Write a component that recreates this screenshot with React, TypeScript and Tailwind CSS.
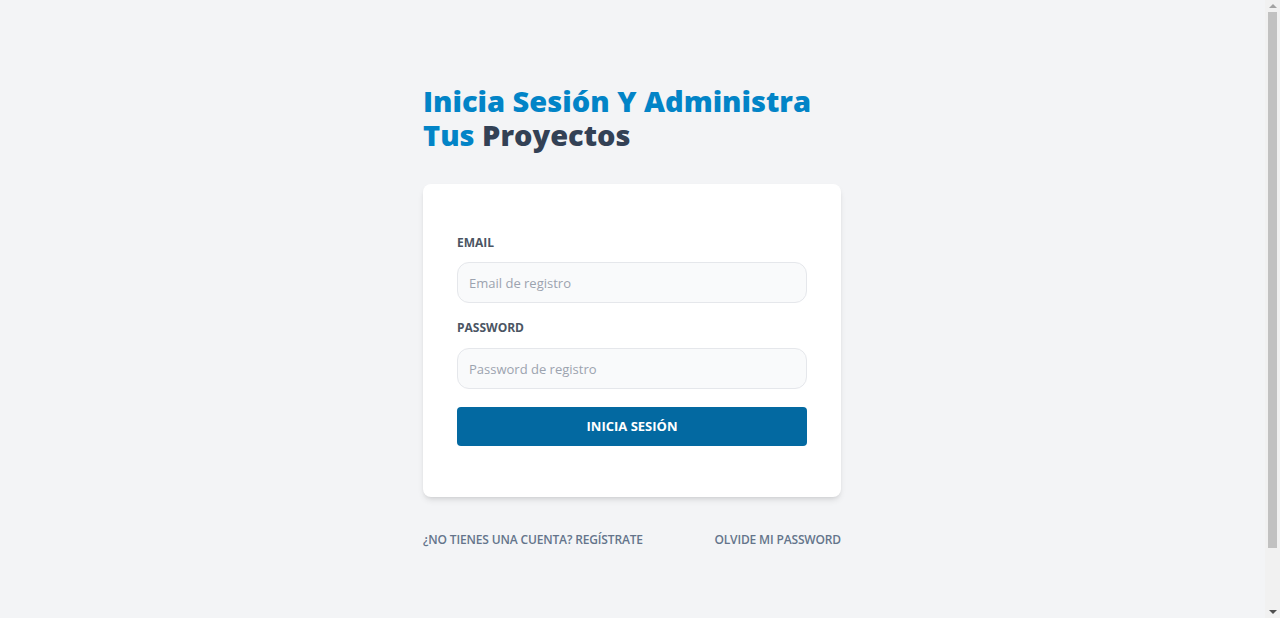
function Scrollbar() {
  return (
    <aside className="flex w-[15px] flex-col items-center bg-[#f1f1f1]">
      <div className="flex h-[12px] w-full items-center justify-center">
        <div className="h-0 w-0 border-x-[4px] border-b-[4px] border-x-transparent border-b-[#a3a3a3]" />
      </div>
      <div className="h-[536px] w-[9px] bg-[#c1c1c1]" />
      <div className="flex-1" />
      <div className="flex h-[12px] w-full items-center justify-center">
        <div className="h-0 w-0 border-x-[4px] border-t-[4px] border-x-transparent border-t-[#505050]" />
      </div>
    </aside>
  );
}

export default function App() {
  return (
    <div className="flex h-screen bg-[#f3f4f6]" style={{ fontFamily: '"Open Sans", sans-serif' }}>
      <div className="flex-1 pt-[84px] pr-px">
        <main className="mx-auto w-[418px]">
          <h1 className="text-[29px] font-extrabold leading-[34px] text-[#0284c7]">
            Inicia Sesión Y Administra Tus <span className="text-[#334155]">Proyectos</span>
          </h1>

          <form className="mt-[32px] rounded-lg bg-white px-[34px] pt-[49px] pb-[51px] shadow-md">
            <div>
              <label htmlFor="email" className="block text-[12px] font-bold uppercase leading-5 text-[#4b5563]">
                Email
              </label>
              <input
                id="email"
                type="email"
                placeholder="Email de registro"
                className="mt-[9px] block h-[41px] w-full rounded-xl border border-[#e5e7eb] bg-[#f9fafb] px-[11px] text-[13px] text-gray-700 outline-none placeholder:text-[#9ca3af]"
              />
            </div>
            <div className="mt-[15px]">
              <label htmlFor="password" className="block text-[12px] font-bold uppercase leading-5 text-[#4b5563]">
                Password
              </label>
              <input
                id="password"
                type="password"
                placeholder="Password de registro"
                className="mt-[10px] block h-[41px] w-full rounded-xl border border-[#e5e7eb] bg-[#f9fafb] px-[11px] text-[13px] text-gray-700 outline-none placeholder:text-[#9ca3af]"
              />
            </div>
            <button
              type="button"
              className="mt-[18px] block h-[39px] w-full rounded bg-[#0369a1] text-[13px] font-bold uppercase text-white"
            >
              Inicia Sesión
            </button>
          </form>

          <nav className="mt-[35px] flex justify-between">
            <a href="#" className="text-[12px] font-semibold uppercase leading-4 tracking-[-0.15px] text-[#64748b]">
              ¿No tienes una cuenta? Regístrate
            </a>
            <a href="#" className="text-[12px] font-semibold uppercase leading-4 tracking-[-0.15px] text-[#64748b]">
              Olvide mi password
            </a>
          </nav>
        </main>
      </div>
      <Scrollbar />
    </div>
  );
}
